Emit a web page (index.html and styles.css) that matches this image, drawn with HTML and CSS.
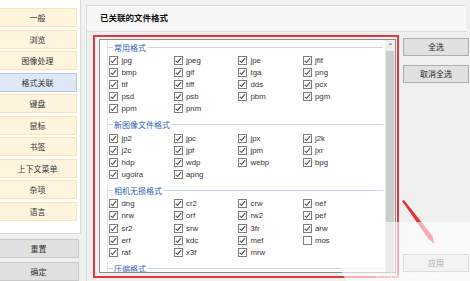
FILE: index.html
```html
<!DOCTYPE html>
<html>
<head>
<meta charset="utf-8" />
<title>文件格式</title>
<link rel="stylesheet" href="styles.css">
</head>
<body>
<div id="wp">
    <div id="side">
        <div id="nav">
            <a class="nav-btn">一般</a>
            <a class="nav-btn">浏览</a>
            <a class="nav-btn">图像处理</a>
            <a class="nav-btn on">格式关联</a>
            <a class="nav-btn">键盘</a>
            <a class="nav-btn">鼠标</a>
            <a class="nav-btn">书签</a>
            <a class="nav-btn">上下文菜单</a>
            <a class="nav-btn">杂项</a>
            <a class="nav-btn">语言</a>
        </div>
        <a class="side-btn">重置</a>
        <a class="side-btn">确定</a>
    </div>
    <div id="main">
        <div class="title">已关联的文件格式</div>
        <div class="content">
            <div class="listbox">
                <div class="list-inner">
                    <div class="grp">
                        <div class="grp-title"><span>常用格式</span></div>
                        <div class="grid">
                            <label class="item"><i class="cb"></i>jpg</label>
                            <label class="item"><i class="cb"></i>jpeg</label>
                            <label class="item"><i class="cb"></i>jpe</label>
                            <label class="item"><i class="cb"></i>jfif</label>
                            <label class="item"><i class="cb"></i>bmp</label>
                            <label class="item"><i class="cb"></i>gif</label>
                            <label class="item"><i class="cb"></i>tga</label>
                            <label class="item"><i class="cb"></i>png</label>
                            <label class="item"><i class="cb"></i>tif</label>
                            <label class="item"><i class="cb"></i>tiff</label>
                            <label class="item"><i class="cb"></i>dds</label>
                            <label class="item"><i class="cb"></i>pcx</label>
                            <label class="item"><i class="cb"></i>psd</label>
                            <label class="item"><i class="cb"></i>psb</label>
                            <label class="item"><i class="cb"></i>pbm</label>
                            <label class="item"><i class="cb"></i>pgm</label>
                            <label class="item"><i class="cb"></i>ppm</label>
                            <label class="item"><i class="cb"></i>pnm</label>
                        </div>
                    </div>
                    <div class="grp">
                        <div class="grp-title"><span>新图像文件格式</span></div>
                        <div class="grid">
                            <label class="item"><i class="cb"></i>jp2</label>
                            <label class="item"><i class="cb"></i>jpc</label>
                            <label class="item"><i class="cb"></i>jpx</label>
                            <label class="item"><i class="cb"></i>j2k</label>
                            <label class="item"><i class="cb"></i>j2c</label>
                            <label class="item"><i class="cb"></i>jpf</label>
                            <label class="item"><i class="cb"></i>jpm</label>
                            <label class="item"><i class="cb"></i>jxr</label>
                            <label class="item"><i class="cb"></i>hdp</label>
                            <label class="item"><i class="cb"></i>wdp</label>
                            <label class="item"><i class="cb"></i>webp</label>
                            <label class="item"><i class="cb"></i>bpg</label>
                            <label class="item"><i class="cb"></i>ugoira</label>
                            <label class="item"><i class="cb"></i>apng</label>
                        </div>
                    </div>
                    <div class="grp">
                        <div class="grp-title"><span>相机无损格式</span></div>
                        <div class="grid">
                            <label class="item"><i class="cb"></i>dng</label>
                            <label class="item"><i class="cb"></i>cr2</label>
                            <label class="item"><i class="cb"></i>crw</label>
                            <label class="item"><i class="cb"></i>nef</label>
                            <label class="item"><i class="cb"></i>nrw</label>
                            <label class="item"><i class="cb"></i>orf</label>
                            <label class="item"><i class="cb"></i>rw2</label>
                            <label class="item"><i class="cb"></i>pef</label>
                            <label class="item"><i class="cb"></i>sr2</label>
                            <label class="item"><i class="cb"></i>srw</label>
                            <label class="item"><i class="cb"></i>3fr</label>
                            <label class="item"><i class="cb"></i>arw</label>
                            <label class="item"><i class="cb"></i>erf</label>
                            <label class="item"><i class="cb"></i>kdc</label>
                            <label class="item"><i class="cb"></i>mef</label>
                            <label class="item"><i class="cb off"></i>mos</label>
                            <label class="item"><i class="cb"></i>raf</label>
                            <label class="item"><i class="cb"></i>x3f</label>
                            <label class="item"><i class="cb"></i>mrw</label>
                        </div>
                    </div>
                    <div class="grp">
                        <div class="grp-title"><span>压缩格式</span></div>
                    </div>
                </div>
                <div class="scroll">
                    <div class="scroll-up">&#8963;</div>
                    <div class="thumb"></div>
                </div>
            </div>
            <div class="actions">
                <a class="btn">全选</a>
                <a class="btn">取消全选</a>
                <a class="btn apply">应用</a>
            </div>
        </div>
    </div>
</div>

<!-- annotation drawn over the screenshot -->
<div class="mark"></div>
<svg class="arrow" width="470" height="281" viewBox="0 0 470 281">
    <polygon points="402,201 404,200 432.5,236 434.5,244 428.5,239" fill="#e8313a"/>
</svg>
<div class="wm">
    <div class="wm-blob"></div>
    <div class="wm-text">jingyan.baidu.com</div>
</div>
</body>
</html>
```
FILE: styles.css
```css
html, body { margin:0; padding:0; }
body {
	width:470px;
	height:281px;
	overflow:hidden;
	position:relative;
	background:#f0f0f0;
	font-family:"Liberation Sans","Noto Sans CJK SC",sans-serif;
	font-size:8px;
	color:#222;
}
#wp { display:flex; height:281px; }

/* left column */
#side { width:81px; flex:none; display:flex; flex-direction:column; }
#nav {
	height:241px;
	box-sizing:border-box;
	background:#fff;
	border-right:1px solid #d9d9d9;
	border-bottom:1px solid #d9d9d9;
	padding-top:8px;
	display:flex;
	flex-direction:column;
	gap:2.5px;
}
.nav-btn {
	display:block;
	width:79px;
	height:19px;
	margin-left:-2px;
	box-sizing:border-box;
	border:1px solid #fbe3b3;
	background:#fff4dc;
	text-align:center;
	line-height:17px;
	font-family:"Noto Sans CJK SC",sans-serif;
	color:#333;
}
.nav-btn.on {
	background:#dfe8f6;
	border-color:#b3c7e6;
}
.side-btn {
	display:block;
	width:81px;
	height:19px;
	margin-left:-2px;
	margin-top:5px;
	box-sizing:border-box;
	border:1px solid #c9c9c9;
	background:#e1e1e1;
	text-align:center;
	line-height:17px;
	font-family:"Noto Sans CJK SC",sans-serif;
	color:#333;
}
.side-btn + .side-btn { margin-top:4px; }

/* right part */
#main {
	flex:1;
	margin-left:5px;
	margin-top:5px;
	border-left:1px solid #d9d9d9;
}
.title {
	height:27px;
	width:379px;
	box-sizing:border-box;
	border-top:1px solid #d9d9d9;
	border-bottom:1px solid #dcdcdc;
	background:#f7f7f7;
	padding-left:13px;
	line-height:22px;
	font-family:"Noto Sans CJK SC",sans-serif;
	font-weight:bold;
	font-size:8.5px;
	color:#111;
}
.content {
	display:flex;
	padding-left:12px;
	padding-top:7px;
}
.listbox {
	width:297px;
	height:234px;
	box-sizing:border-box;
	border:1px solid #8a8a8a;
	background:#fff;
	display:flex;
}
.list-inner { flex:1; overflow:hidden; }
.scroll {
	width:10px;
	flex:none;
	background:#e9e9e9;
	display:flex;
	flex-direction:column;
}
.scroll-up {
	height:11px;
	background:#f0f0f0;
	text-align:center;
	font-size:8px;
	line-height:13px;
	color:#555;
}
.thumb { flex:1; background:#cdcdcd; margin:0 1px; }

.grp {
	margin-left:7px;
	margin-bottom:3px;
	border-left:1px solid #dfe6f2;
}
.grp-title {
	height:14px;
	display:flex;
	align-items:center;
	margin-right:2px;
	margin-left:-1px;
}
.grp-title:before {
	content:"";
	width:6px;
	height:1px;
	background:#c9d5ea;
}
.grp-title:after {
	content:"";
	flex:1;
	height:1px;
	background:#c9d5ea;
}
.grp-title span {
	padding:0 2px 0 1px;
	font-family:"Noto Sans CJK SC",sans-serif;
	color:#2e60b4;
}
.grid {
	display:grid;
	grid-template-columns:repeat(4, 64.5px);
	grid-auto-rows:12.2px;
	padding-left:1px;
}
.item {
	display:flex;
	align-items:center;
	gap:3.5px;
	font-size:7.8px;
	color:#333;
}
.cb {
	position:relative;
	width:9px;
	height:9px;
	box-sizing:border-box;
	border:1px solid #7d7d7d;
	background:#fff;
	flex:none;
}
.cb:after {
	content:"";
	position:absolute;
	left:2.3px;
	top:0px;
	width:2.4px;
	height:4.6px;
	border-right:1px solid #4a4a4a;
	border-bottom:1px solid #4a4a4a;
	transform:rotate(40deg);
}
.cb.off:after { display:none; }

.actions {
	margin-left:7px;
	margin-top:-1px;
	width:66px;
	height:234px;
	display:flex;
	flex-direction:column;
	gap:9px;
}
.btn {
	display:block;
	height:18px;
	box-sizing:border-box;
	border:1px solid #adadad;
	background:#e1e1e1;
	text-align:center;
	line-height:16px;
	font-family:"Noto Sans CJK SC",sans-serif;
	color:#222;
}
.btn.apply { margin-top:auto; }

/* red box and arrow from the tutorial screenshot */
.mark {
	position:absolute;
	left:93px;
	top:35px;
	width:302px;
	height:239px;
	border:2px solid #e8353e;
}
.arrow { position:absolute; left:0; top:0; }
.wm { position:absolute; left:0; top:0; width:470px; height:281px; }
.wm-blob {
	position:absolute;
	left:340px;
	top:222px;
	width:140px;
	height:70px;
	border-radius:40px 10px 0 30px;
	background:rgba(255,255,255,0.6);
}
.wm-text {
	position:absolute;
	left:376px;
	top:272px;
	font-family:"Liberation Sans",sans-serif;
	font-size:8px;
	line-height:9px;
	color:rgba(255,255,255,0.9);
}
```
